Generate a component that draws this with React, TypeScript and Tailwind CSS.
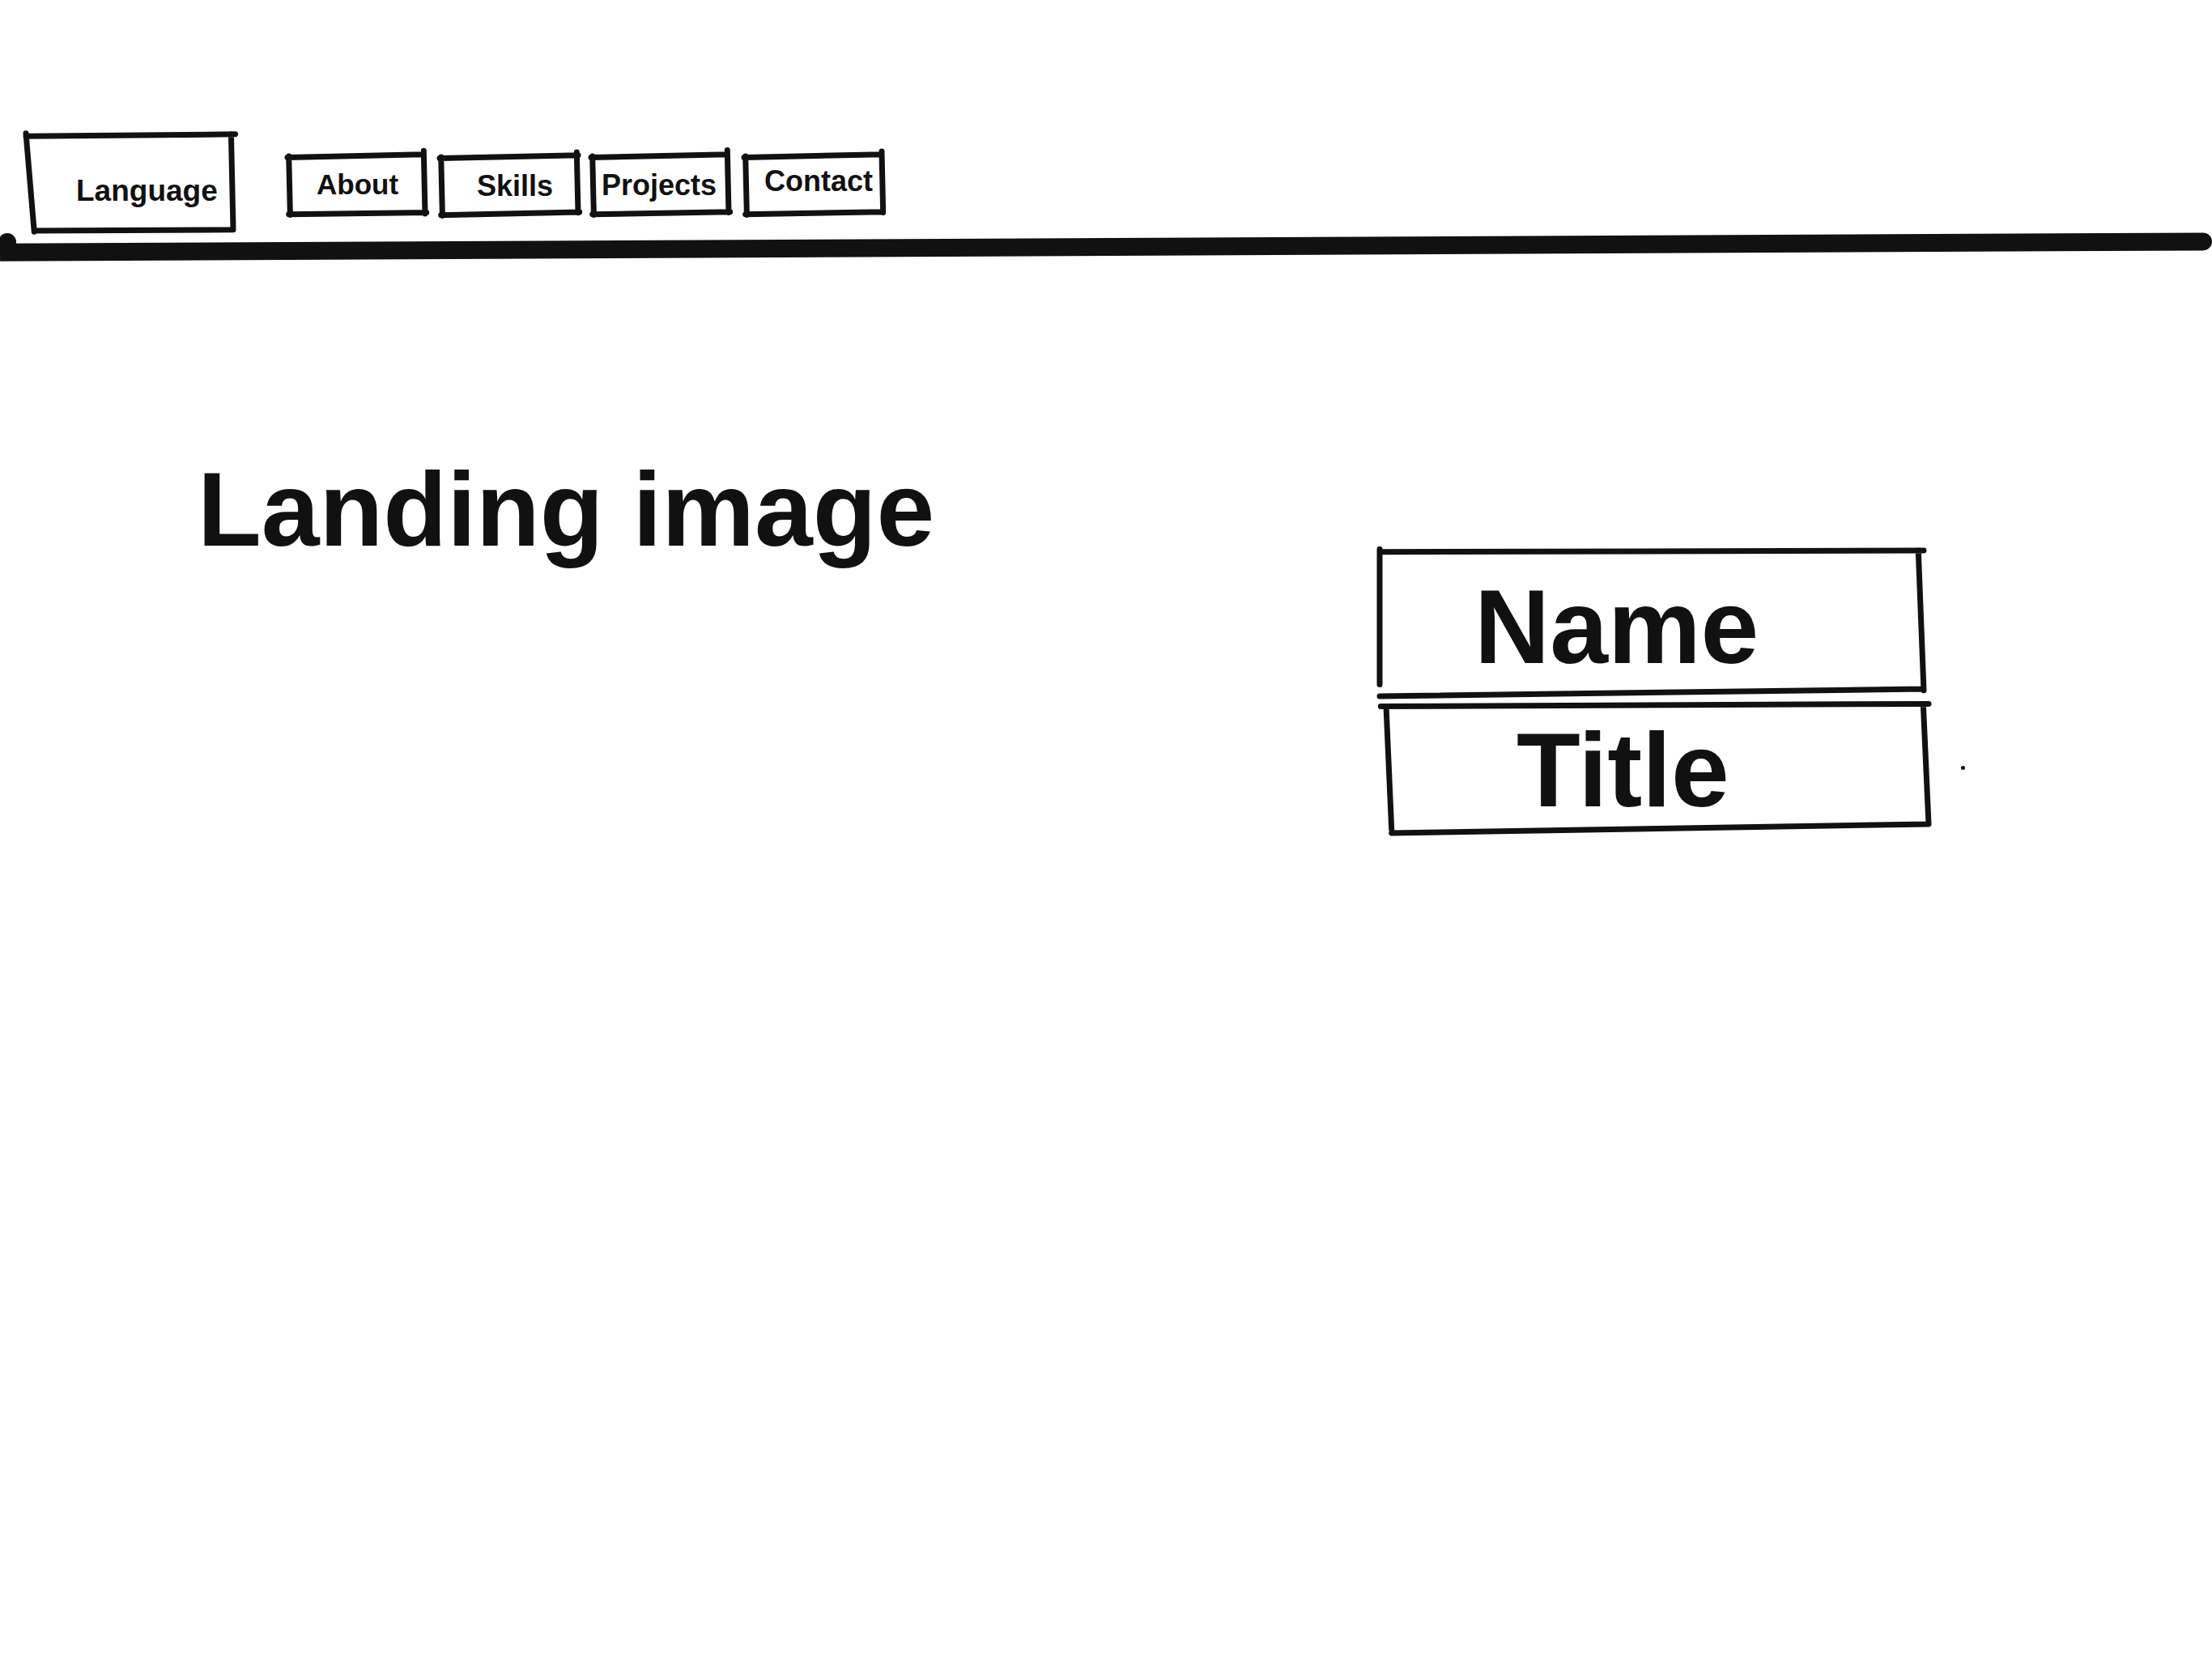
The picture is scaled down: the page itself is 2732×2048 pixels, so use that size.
import React from "react";

type BoxProps = {
  className: string;
  path: string;
  stroke?: number;
  children: React.ReactNode;
};

function SketchBox({ className, path, stroke = 7, children }: BoxProps) {
  return (
    <div className={`relative shrink-0 ${className}`}>
      <svg
        className="absolute inset-0 h-full w-full overflow-visible"
        viewBox="0 0 100 100"
        preserveAspectRatio="none"
        aria-hidden="true"
      >
        <path
          d={path}
          fill="none"
          stroke="#111111"
          strokeWidth={stroke}
          strokeLinecap="round"
          strokeLinejoin="round"
          vectorEffect="non-scaling-stroke"
        />
      </svg>
      {children}
    </div>
  );
}

export default function App() {
  return (
    <div
      className="relative h-[2048px] w-[2732px] overflow-hidden bg-white text-[#111111]"
      style={{ fontFamily: '"Liberation Sans", Arial, sans-serif' }}
    >
      {/* Navigation */}
      <header className="flex items-start pl-[32px] pt-[167px]">
        <SketchBox
          className="h-[118px] w-[256px]"
          path="M0 1 L101 -1 M99 -1 L100 98 M100 99 L4 100 M0 -2 L4 101"
        >
          <div className="pl-[62px] pt-[50px] text-[37px] font-bold leading-none">Language</div>
        </SketchBox>

        <SketchBox
          className="ml-[67px] mt-[23px] h-[74px] w-[170px]"
          path="M0 6 L99 1 M99 -5 L100 100 M101 98 L1 101 M1 4 L2 102"
        >
          <div className="pl-[36px] pt-[20px] text-[35px] font-bold leading-none">About</div>
        </SketchBox>

        <SketchBox
          className="ml-[18px] mt-[24px] h-[74px] w-[171px]"
          path="M0 6 L100 1 M99 -4 L100 97 M101 96 L1 101 M1 4 L2 102"
        >
          <div className="pl-[46px] pt-[21px] text-[36px] font-bold leading-none">Skills</div>
        </SketchBox>

        <SketchBox
          className="ml-[16px] mt-[23px] h-[74px] w-[170px]"
          path="M0 6 L99 1 M99 -6 L100 98 M101 97 L1 101 M1 4 L2 102"
        >
          <div className="pl-[13px] pt-[21px] text-[36px] font-bold leading-none">Projects</div>
        </SketchBox>

        <SketchBox
          className="ml-[19px] mt-[23px] h-[74px] w-[170px]"
          path="M0 6 L100 1 M100 -4 L101 98 M101 97 L1 101 M1 4 L2 102"
        >
          <div className="pl-[25px] pt-[16px] text-[36px] font-bold leading-none">Contact</div>
        </SketchBox>
      </header>

      {/* Thick rule */}
      <div className="relative mt-[9px] h-[22px]">
        <div className="h-[22px] w-full -rotate-[0.28deg] rounded-r-full bg-[#111111]" />
        <div className="absolute left-[-2px] top-[-6px] h-[24px] w-[22px] rounded-full bg-[#111111]" />
      </div>

      {/* Content */}
      <main className="flex items-start pt-[249px]">
        <div className="w-[1704px] shrink-0 pl-[244px]">
          <h1 className="text-[129px] font-bold leading-none">Landing image</h1>
        </div>

        <div className="mt-[115px] flex flex-col">
          <SketchBox
            className="h-[180px] w-[672px]"
            path="M0 1 L100 0 M99 0 L100 96 M100 95 L0 100 M0 -1 L0 92"
          >
            <div className="pl-[117px] pt-[30px] text-[129px] font-bold leading-none">Name</div>
          </SketchBox>

          <div className="flex items-center">
            <SketchBox
              className="ml-[8px] mt-[11px] h-[158px] w-[670px]"
              path="M-1 1 L100 -1 M99 -1 L100 93 M100 93 L1 100 M0 1 L1 97"
            >
              <div className="pl-[161px] pt-[16px] text-[129px] font-bold leading-none">Title</div>
            </SketchBox>
            <div className="ml-[40px] mt-[8px] h-[5px] w-[5px] rounded-full bg-[#111111]" />
          </div>
        </div>
      </main>
    </div>
  );
}
